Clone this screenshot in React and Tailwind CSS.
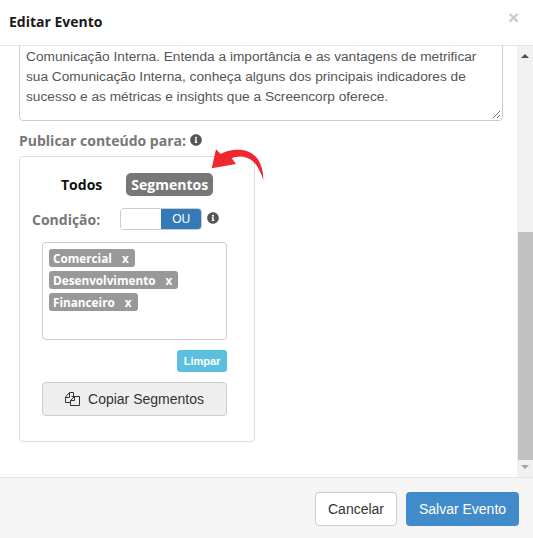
import { FaInfoCircle } from "react-icons/fa";

const tags = ["Comercial", "Desenvolvimento", "Financeiro"];

function Tag({ label }) {
  return (
    <div className="flex h-[18px] w-fit items-center gap-[10px] rounded-[3px] bg-[#999999] pl-1 pr-[6px] pt-px font-['Open_Sans',sans-serif] text-[11.75px] font-bold text-white">
      <span>{label}</span>
      <span>x</span>
    </div>
  );
}

function Arrow() {
  return (
    <svg className="absolute left-[191px] top-[-9px]" width="56" height="36" viewBox="0 0 56 36">
      <path
        d="M5 1.3 L9.7 6 C14 3.5 18 2.4 22.3 2 C28 1.4 32 1.8 35.7 3 C41 5 45 8 47.3 12 C50.5 17 52.5 24 52.3 32 C50.5 26 47.5 20 44 15.3 C41 12 37 9.5 32.3 8.7 C28 8 24 8.8 20.7 10.3 L25 16 L0.7 20.3 Z"
        fill="#f0282d"
      />
    </svg>
  );
}

function CopyIcon() {
  return (
    <svg width="15" height="14" viewBox="0 0 15 14" fill="none" stroke="#333333" strokeWidth="1">
      <path d="M5.5 10.5 H0.5 V5 L4.5 0.5 H8.5 V4" />
      <path d="M0.5 5.5 H4.5 V1" />
      <path d="M6.5 4.5 H14.5 V13.5 H5.5 V8.5 L9.5 4.5 V8.5 H5.5" />
    </svg>
  );
}

export default function App() {
  return (
    <div className="flex h-[538px] w-[533px] flex-col overflow-hidden bg-white font-['Liberation_Sans',sans-serif] text-[14px] text-[#555555]">
      {/* HEADER */}
      <div className="flex h-[46px] shrink-0 items-start justify-between border-b border-[#e5e5e5] pl-[9px] pr-[14px]">
        <h4 className="pt-[11px] font-['Open_Sans',sans-serif] text-[14px] font-bold leading-[22px] text-[#1a1a1a]">
          Editar Evento
        </h4>
        <span className="pt-[6px] font-['Liberation_Sans',sans-serif] text-[19px] font-bold leading-[24px] text-[#c9c9c9]">
          ×
        </span>
      </div>

      {/* BODY */}
      <div className="flex min-h-0 flex-1">
        <div className="min-w-0 flex-1 overflow-hidden pl-[19px] pr-[14px]">
          <div className="relative -mt-px h-[76px] rounded-b-[4px] border border-[#cccccc] px-[6px] pt-px text-[13.7px] leading-[20px]">
            <p className="whitespace-nowrap">Comunicação Interna. Entenda a importância e as vantagens de metrificar</p>
            <p className="whitespace-nowrap">sua Comunicação Interna, conheça alguns dos principais indicadores de</p>
            <p className="whitespace-nowrap">sucesso e as métricas e insights que a Screencorp oferece.</p>
            <svg className="absolute bottom-px right-px" width="10" height="10" viewBox="0 0 10 10" stroke="#777777">
              <path d="M2 9 L9 2 M6 9 L9 6" />
            </svg>
          </div>

          <div className="mt-[8px] flex h-[22px] items-center gap-1 font-['Open_Sans',sans-serif] text-[14px] font-bold text-[#777777]">
            <span>Publicar conteúdo para:</span>
            <FaInfoCircle className="text-[12px] text-[#555555]" />
          </div>

          {/* PANEL */}
          <div className="relative mt-[5px] h-[286px] w-[236px] rounded-[4px] border border-[#dddddd] px-[22px]">
            <Arrow />
            <div className="mt-[16px] flex h-[23px] items-center font-['Open_Sans',sans-serif] text-[14px] font-bold">
              <span className="ml-[19px] text-[#111111]">Todos</span>
              <span className="ml-[24px] flex h-[23px] w-[87px] items-center justify-center rounded-[5px] bg-[#777777] text-[#ffffff]">
                Segmentos
              </span>
            </div>

            <div className="-ml-[10px] mt-[12px] flex h-[22px] items-center font-['Open_Sans',sans-serif] text-[14px] font-bold text-[#777777]">
              <span>Condição:</span>
              <div className="ml-[20px] flex h-[22px] w-[82px] overflow-hidden rounded-[4px] border border-[#cccccc]">
                <div className="flex-1 bg-white" />
                <div className="flex w-[40px] items-center justify-center bg-[#337ab7] font-['Liberation_Sans',sans-serif] text-[12px] font-normal text-white">
                  OU
                </div>
              </div>
              <FaInfoCircle className="ml-[5px] -translate-y-px text-[12px] text-[#555555]" />
            </div>

            {/* SEGMENTOS */}
            <div className="mt-[12px] flex h-[98px] w-[185px] flex-col gap-1 rounded-[4px] border border-[#cccccc] px-[6px] pt-[6px]">
              {tags.map((t) => (
                <Tag key={t} label={t} />
              ))}
            </div>

            <div className="mt-[10px] flex w-[185px] justify-end">
              <button className="flex h-[22px] w-[50px] items-center justify-center rounded-[3px] bg-[#5bc0de] text-[11px] font-bold text-white">
                Limpar
              </button>
            </div>

            <button className="mt-[10px] flex h-[34px] w-[185px] items-center justify-center gap-[8px] rounded-[4px] border border-[#cccccc] bg-[#eeeeee] text-[14px] text-[#333333]">
              <CopyIcon />
              Copiar Segmentos
            </button>
          </div>
        </div>

        {/* SCROLLBAR */}
        <div className="flex w-4 shrink-0 flex-col items-center bg-[#f1f1f1]">
          <div className="mt-[8px] h-0 w-0 border-x-[4px] border-b-[4px] border-x-transparent border-b-[#505050]" />
          <div className="mt-[174px] h-[228px] w-[15px] bg-[#c1c1c1]" />
          <div className="mt-[5px] h-0 w-0 border-x-[4px] border-t-[4px] border-x-transparent border-t-[#a3a3a3]" />
        </div>
      </div>

      {/* FOOTER */}
      <div className="flex h-[61px] shrink-0 items-center justify-end gap-[9px] border-t border-[#e5e5e5] bg-[#f5f5f5] pr-[14px] pt-[2px]">
        <button className="h-[34px] w-[82px] rounded-[4px] border border-[#cccccc] bg-white text-[14px] text-[#333333]">
          Cancelar
        </button>
        <button className="h-[34px] w-[113px] rounded-[4px] bg-[#428bca] text-[14px] text-white">
          Salvar Evento
        </button>
      </div>
    </div>
  );
}
